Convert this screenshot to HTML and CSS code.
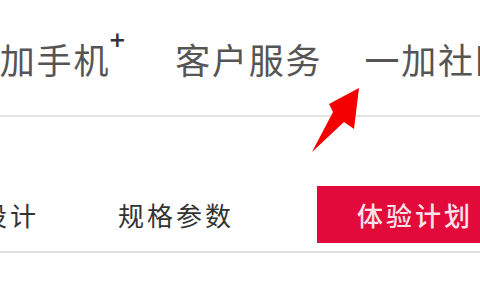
FILE: index.html
```html
<!DOCTYPE html>
<html lang="zh-CN">
<head>
  <meta charset="UTF-8" />
  <title>一加</title>
  <link rel="stylesheet" href="styles.css">
</head>
<body>
  <div class="page">
    <div class="topnav">
      <span class="topnav-item first">一加手机<sup class="plus">+</sup></span>
      <span class="topnav-item">客户服务</span>
      <span class="topnav-item">一加社区</span>
    </div>

    <div class="subnav">
      <div class="subnav-row">
        <span class="subnav-item first">设计</span>
        <span class="subnav-item">规格参数</span>
        <span class="subnav-btn">体验计划</span>
      </div>
    </div>

    <svg class="arrow" width="480" height="300" viewBox="0 0 480 300">
      <polygon points="312,152 333,112 329,104 359,88 354,129 344,122" fill="#f50000"/>
    </svg>
  </div>
</body>
</html>
```

FILE: styles.css
```css
body {
  margin: 0;
  padding: 0;
  background: #fff;
  font-family: "Noto Sans CJK SC", "Noto Sans", sans-serif;
  overflow: hidden;
}
.page {
  position: relative;
  width: 480px;
  height: 300px;
  overflow: hidden;
}
.topnav {
  display: flex;
  align-items: center;
  height: 117px;
  padding-top: 2px;
  box-sizing: border-box;
  border-bottom: 2px solid #e2e2e2;
  white-space: nowrap;
}
.topnav-item {
  font-size: 35px;
  letter-spacing: 1.8px;
  color: #555;
  margin-right: 42px;
}
.topnav-item.first {
  margin-left: -37px;
  margin-right: 65px;
  position: relative;
}
.plus {
  position: absolute;
  top: -5px;
  right: -16px;
  font-size: 21px;
  font-weight: bold;
  color: #333;
  letter-spacing: 0;
  font-family: "DejaVu Sans", sans-serif;
}
.subnav {
  padding: 69px 0 8px;
  border-bottom: 2px solid #e0e0e0;
}
.subnav-row {
  display: flex;
  align-items: center;
  height: 57px;
  white-space: nowrap;
}
.subnav-item {
  font-size: 26px;
  letter-spacing: 3px;
  color: #333;
  margin-right: 83px;
}
.subnav-item.first {
  margin-left: -19px;
  margin-right: 79px;
}
.subnav-btn {
  flex-shrink: 0;
  display: flex;
  align-items: center;
  height: 57px;
  padding: 0 40px;
  background: #e10a3a;
  color: #f8e2e7;
  font-size: 26px;
  letter-spacing: 3px;
  font-weight: 500;
}
.arrow {
  position: absolute;
  top: 0;
  left: 0;
  pointer-events: none;
}
```
